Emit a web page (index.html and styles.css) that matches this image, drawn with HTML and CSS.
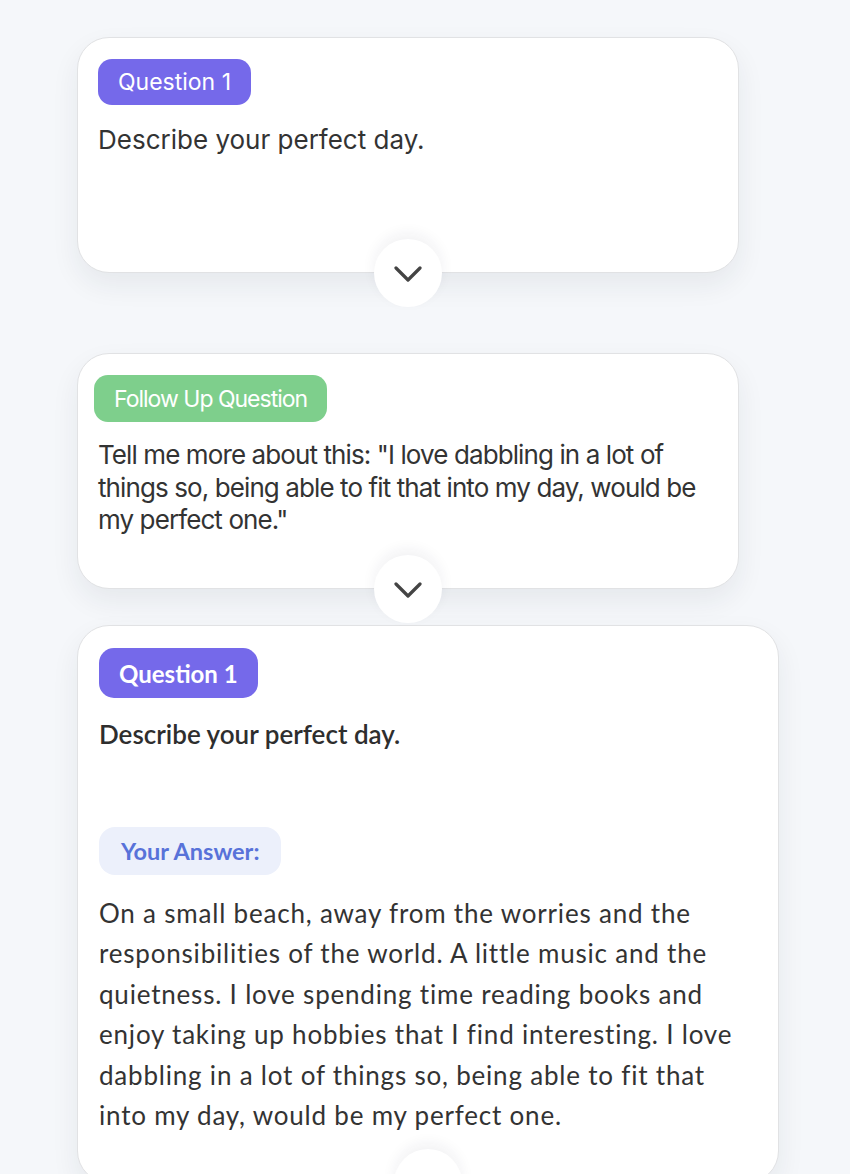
FILE: index.html
```html
<!DOCTYPE html>
<html>
<head>
<meta charset="utf-8">
<link rel="stylesheet" href="styles.css">
</head>
<body>
<div class="list">
  <div class="card card-short">
    <span class="badge badge-purple">Question 1</span>
    <p class="question">Describe your perfect day.</p>
    <button class="toggle" aria-label="Expand">
      <svg width="28" height="16" viewBox="0 0 28 16"><path d="M2 2 L14 14 L26 2" fill="none" stroke="#444" stroke-width="3.2" stroke-linecap="round" stroke-linejoin="round"/></svg>
    </button>
  </div>
  <div class="card card-short card-follow">
    <span class="badge badge-green">Follow Up Question</span>
    <p class="question question-tight">Tell me more about this: "I love dabbling in a lot of things so, being able to fit that into my day, would be my perfect one."</p>
    <button class="toggle" aria-label="Expand">
      <svg width="28" height="16" viewBox="0 0 28 16"><path d="M2 2 L14 14 L26 2" fill="none" stroke="#444" stroke-width="3.2" stroke-linecap="round" stroke-linejoin="round"/></svg>
    </button>
  </div>
  <div class="card card-open">
    <span class="badge badge-purple badge-geo">Question 1</span>
    <p class="title">Describe your perfect day.</p>
    <span class="answer-label">Your Answer:</span>
    <p class="answer">On a small beach, away from the worries and the responsibilities of the world. A little music and the quietness. I love spending time reading books and enjoy taking up hobbies that I find interesting. I love dabbling in a lot of things so, being able to fit that into my day, would be my perfect one.</p>
    <button class="toggle" aria-label="Collapse">
      <svg width="28" height="16" viewBox="0 0 28 16"><path d="M2 2 L14 14 L26 2" fill="none" stroke="#444" stroke-width="3.2" stroke-linecap="round" stroke-linejoin="round"/></svg>
    </button>
  </div>
</div>
</body>
</html>
```
FILE: styles.css
```css
html, body {
  margin: 0;
  padding: 0;
}
body {
  background: #f5f7fa;
  font-family: Inter, "Noto Sans", sans-serif;
  color: #333;
  height: 1174px;
  overflow: hidden;
}
.list {
  display: flex;
  flex-direction: column;
  align-items: flex-start;
  padding: 37px 0 0 77px;
}
.card {
  position: relative;
  box-sizing: border-box;
  background: #fff;
  border: 1.5px solid #e1e2e4;
  border-radius: 32px;
  box-shadow: 0 12px 28px rgba(30, 40, 60, 0.07);
  padding: 21px 20px;
  display: flex;
  flex-direction: column;
  align-items: flex-start;
}
.card-short {
  width: 662px;
  height: 236px;
  margin-bottom: 80px;
}
.card-follow {
  margin-bottom: 36px;
}
.card-open {
  width: 702px;
  height: 558px;
  padding: 22px 21px;
  font-family: Lato, "Noto Sans", sans-serif;
}
.badge {
  display: inline-flex;
  align-items: center;
  height: 46px;
  padding: 0 20px;
  border-radius: 14px;
  color: #fff;
  font-size: 23px;
  box-sizing: border-box;
}
.badge-purple {
  background: #7569ea;
}
.badge-green {
  background: #7ecf8c;
  height: 47px;
  margin-left: -4px;
  letter-spacing: -1px;
  font-size: 23px;
}
.badge-geo {
  height: 50px;
  font-weight: 700;
  font-size: 24px;
  padding: 0 20px;
  border-radius: 15px;
}
.question {
  margin: 19px 0 0;
  font-size: 26px;
  line-height: 32px;
  color: #333;
}
.question-tight {
  margin-top: 17px;
  font-size: 26px;
  line-height: 32.5px;
  letter-spacing: -0.9px;
}
.title {
  margin: 20px 0 0;
  font-size: 26px;
  line-height: 32px;
  font-weight: 600;
  color: #2e2e2e;
}
.answer-label {
  margin-top: 77px;
  display: inline-flex;
  align-items: center;
  height: 48px;
  padding: 0 22px;
  border-radius: 16px;
  background: #ecf0fb;
  color: #5872d9;
  font-size: 23.5px;
  font-weight: 700;
  box-sizing: border-box;
}
.answer {
  margin: 18px 0 0;
  max-width: 640px;
  font-size: 26px;
  line-height: 40.4px;
  letter-spacing: 0.8px;
  color: #333;
}
.toggle {
  position: absolute;
  left: 50%;
  bottom: -35px;
  transform: translateX(-50%);
  width: 68px;
  height: 68px;
  border: none;
  border-radius: 50%;
  background: #fff;
  box-shadow: 0 -6px 14px rgba(30, 40, 60, 0.06);
  display: flex;
  align-items: center;
  justify-content: center;
  padding: 0;
  z-index: 2;
}
.toggle svg {
  display: block;
  margin-top: 2px;
}
```
